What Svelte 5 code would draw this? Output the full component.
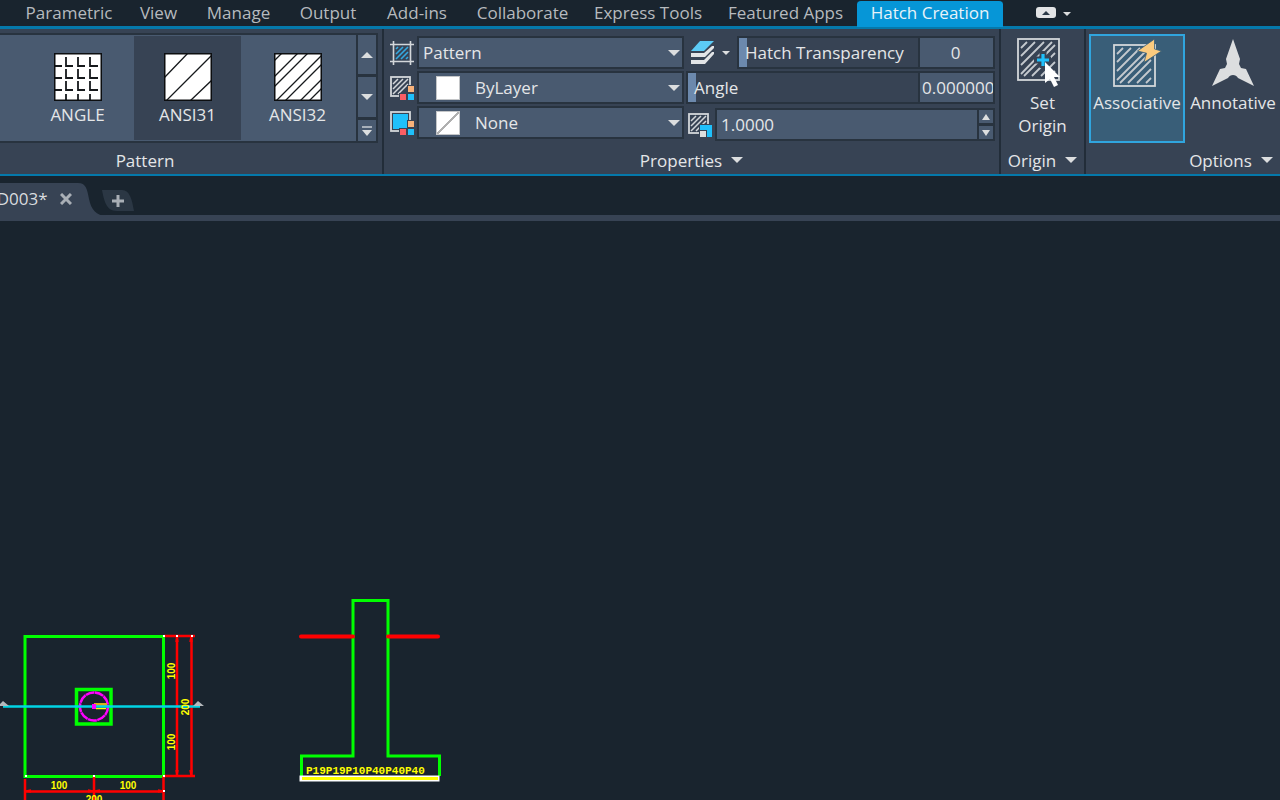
<script>
  const tabs = ['Parametric', 'View', 'Manage', 'Output', 'Add-ins', 'Collaborate', 'Express Tools', 'Featured Apps', 'Hatch Creation'];
  let activeTab = $state('Hatch Creation');
  let pattern = $state('ANSI31');
  let associative = $state(true);
  let transparency = $state(0);
  let angle = $state(0);
  const patterns = [
    { name: 'ANGLE', d: 'M0 13h8M12 4v9h7M24 4v9h7M36 4v9h8M0 25h8M12 16v9h7M24 16v9h7M36 16v9h8M0 37h8M12 28v9h7M24 28v9h7M36 28v9h8M12 41v7M24 41v7M36 41v7' },
    { name: 'ANSI31', d: 'M0 25L24 0M2 48L48 2M26 48L48 27' },
    { name: 'ANSI32', d: 'M0 8L8 0M0 24L24 0M0 34L34 0M2 48L48 2M11 48L48 11M26 48L48 26M35 48L48 35' }
  ];
</script>

{#snippet caret(w = 12)}
  <svg class="caret" width={w} height={w / 2} viewBox="0 0 12 6" aria-hidden="true"><path d="M0 0h12L6 6z" fill="#dcdedf" /></svg>
{/snippet}

<div class="app">
  <nav class="tabs" aria-label="Ribbon tabs">
    {#each tabs as t}
      <button class="tab" class:active={t === activeTab} onclick={() => (activeTab = t)}>{t}</button>
    {/each}
    <button class="min" aria-label="Minimize ribbon">
      <svg width="36" height="12" viewBox="0 0 36 12"><rect x="1" width="20" height="11" rx="3" fill="#e2e4e6" /><path d="M7 8l4-4 4 4z" fill="#2b3947" /><path d="M28 5h8l-4 4z" fill="#dcdedf" /></svg>
    </button>
  </nav>

  <div class="ribbon">
    <section class="panel pattern-panel">
      <div class="gallery">
        <div class="items">
          {#each patterns as p}
            <button class="item" class:selected={p.name === pattern} onclick={() => (pattern = p.name)}>
              <svg width="48" height="48" viewBox="0 0 48 48"><rect width="48" height="48" fill="#fff" /><path d={p.d} fill="none" stroke="#16191c" stroke-width={p.name === 'ANGLE' ? 1.8 : 1.3} /><rect x=".75" y=".75" width="46.5" height="46.5" fill="none" stroke="#0c0e10" stroke-width="1.5" /></svg>
              <span>{p.name}</span>
            </button>
          {/each}
        </div>
        <div class="scroll">
          <button aria-label="Scroll up"><svg width="12" height="6" viewBox="0 0 12 6"><path d="M0 6h12L6 0z" fill="#dcdedf" /></svg></button>
          <button aria-label="Scroll down">{@render caret()}</button>
          <button aria-label="Expand gallery"><svg width="10" height="10" viewBox="0 0 10 10"><path d="M0 1h10" stroke="#a9b1ba" stroke-width="2" /><path d="M0 4h10L5 10z" fill="#dcdedf" /></svg></button>
        </div>
      </div>
      <h2 class="title">Pattern</h2>
    </section>

    <section class="panel props-panel">
      <div class="props">
        <div class="col">
          <div class="row">
            <svg width="24" height="24" viewBox="0 0 24 24"><path d="M6 18l12-12M6 13l7-7M6 8l2-2M11 18l7-7M16 18l2-2" stroke="#35a9e0" stroke-width="1.6" /><path d="M3.5 0v24M20.5 0v24M0 3.5h24M0 20.5h24" stroke="#d3d7da" stroke-width="1.6" /></svg>
            <div class="combo"><select aria-label="Hatch type"><option>Pattern</option></select>{@render caret()}</div>
          </div>
          <div class="row">
            <svg width="24" height="24" viewBox="0 0 24 24"><rect x="1" y="1" width="19" height="19" fill="none" stroke="#d3d7da" stroke-width="1.8" /><path d="M3 18L18 3M3 13L13 3M3 8l5-5M8 18L18 8" stroke="#d3d7da" stroke-width="1.5" /><path d="M9 17h8v-8h7v15H9z" fill="#374354" /><path d="M18 10h6v6h-6z" fill="#f7b27a" /><path d="M10 18h6v6h-6z" fill="#fb5e64" /><path d="M18 18h6v6h-6z" fill="#1fc0fb" /></svg>
            <div class="combo"><i class="swatch"></i><select class="indent" aria-label="Hatch color"><option>ByLayer</option></select>{@render caret()}</div>
          </div>
          <div class="row">
            <svg width="24" height="24" viewBox="0 0 24 24"><rect x="1" y="1" width="19" height="19" fill="none" stroke="#d3d7da" stroke-width="1.8" /><path d="M3 3h15v15H3z" fill="#1fc0fb" /><path d="M9 17h8v-8h7v15H9z" fill="#374354" /><path d="M18 10h6v6h-6z" fill="#f7b27a" /><path d="M10 18h6v6h-6z" fill="#fb5e64" /><path d="M18 18h6v6h-6z" fill="#1fc0fb" /></svg>
            <div class="combo"><i class="swatch none"></i><select class="indent" aria-label="Background color"><option>None</option></select>{@render caret()}</div>
          </div>
        </div>
        <div class="col right">
          <div class="row">
            <button class="layers" aria-label="Layer override">
              <svg width="24" height="24" viewBox="0 0 24 24"><path d="M10 0h14L14 10H1z" fill="#5ccbf6" /><path d="M1 12h13L22 5h2v2l-9 9H1zM1 19h13l8-8h2v2l-9 10H1z" fill="#e2e4e6" /></svg>
              {@render caret(8)}
            </button>
            <div class="slider">
              <div class="track"><input id="transp" type="range" min="0" max="90" bind:value={transparency} /><label for="transp">Hatch Transparency</label></div>
              <input class="value centered" aria-label="Transparency value" value={transparency} />
            </div>
          </div>
          <div class="row">
            <div class="slider">
              <div class="track"><input id="angle" type="range" min="0" max="359" bind:value={angle} /><label for="angle">Angle</label></div>
              <input class="value" aria-label="Angle value" value={angle.toFixed(10)} />
            </div>
          </div>
          <div class="row scale">
            <svg width="24" height="24" viewBox="0 0 24 24"><rect x="1" y="1" width="19" height="19" fill="none" stroke="#d3d7da" stroke-width="1.8" /><path d="M3 18L18 3M3 13L13 3M3 8l5-5M8 18L18 8" stroke="#d3d7da" stroke-width="1.5" /><path d="M11 11h13v13H11z" fill="#374354" /><path d="M12 12h12v12h-5v-7h-7z" fill="#1fc0fb" /><path d="M12 18h6v6h-6z" fill="#dcdedf" /></svg>
            <div class="spin">
              <input aria-label="Hatch scale" value="1.0000" />
              <div class="steps">
                <button aria-label="Increase scale"><svg width="8" height="6" viewBox="0 0 8 6"><path d="M0 6h8L4 0z" fill="#dcdedf" /></svg></button>
                <button aria-label="Decrease scale"><svg width="8" height="6" viewBox="0 0 8 6"><path d="M0 0h8L4 6z" fill="#dcdedf" /></svg></button>
              </div>
            </div>
          </div>
        </div>
      </div>
      <h2 class="title">Properties {@render caret()}</h2>
    </section>

    <section class="panel origin-panel">
      <button class="big">
        <svg width="52" height="50" viewBox="0 0 52 50"><rect x="1" y="1" width="41" height="41" fill="none" stroke="#d3d7da" stroke-width="1.8" /><path d="M4 10l6-6M4 18L18 4M4 27L27 4M4 36L35 4M7 38L38 7M15 38L38 15M24 38L38 24M33 38l5-5" stroke="#c4c9ce" stroke-width="1.8" /><path d="M26 13v17M17 22h17" stroke="#374354" stroke-width="7" /><path d="M26 16v12M20 22h12" stroke="#1fc0fb" stroke-width="3.200" /><path d="M28 24v21l5-4 4 8 4-2-4-8h6z" fill="#fff" /></svg>
        <span>Set<br />Origin</span>
      </button>
      <h2 class="title">Origin {@render caret()}</h2>
    </section>

    <section class="panel options-panel">
      <div class="options">
        <button class="big toggle" class:on={associative} aria-pressed={associative} onclick={() => (associative = !associative)}>
          <svg width="50" height="50" viewBox="0 0 50 50"><rect x="2" y="6" width="41" height="41" fill="none" stroke="#d3d7da" stroke-width="1.8" /><path d="M5 15l6-6M5 23L19 9M5 32L28 9M5 41L37 9M8 44l31-31M16 44l23-23M25 44l14-14M34 44l5-5" stroke="#c4c9ce" stroke-width="1.8" /><path d="M42.500 0L25.500 12l9 2.200L32 23.500 49.500 12l-7-2z" fill="#fbcb7e" stroke="#395e78" stroke-width=".8" /></svg>
          <span>Associative</span>
        </button>
        <button class="big toggle">
          <svg width="42" height="50" viewBox="0 0 42 50"><path d="M21 0l7 20-1 5 2 4 5 1 8 17-16-8c-2-4-8-4-10 0L0 47l8-17 5-1 2-4-1-5z" fill="#dcdedf" /></svg>
          <span>Annotative</span>
        </button>
      </div>
      <h2 class="title">Options {@render caret()}</h2>
    </section>
  </div>

  <div class="docs">
    <div class="doc">
      <svg class="shape" width="122" height="40" viewBox="0 0 122 40" aria-hidden="true"><path d="M0 7h78c8 0 9 6 11 16 2 10 7 17 18 17H0z" fill="#374354" /></svg>
      <span>AD003*</span>
      <button aria-label="Close drawing"><svg width="12" height="12" viewBox="0 0 12 12"><path d="M1 1l10 10M11 1L1 11" stroke="#a9afb6" stroke-width="3" /></svg></button>
    </div>
    <button class="add" aria-label="New drawing"><svg width="32" height="21" viewBox="0 0 32 21"><path d="M0 0h20c8 0 10 10 12 21H15C4 21 2 10 0 0z" fill="#2b3744" /><path d="M16 5v12M10 11h12" stroke="#a9afb6" stroke-width="3" /></svg></button>
  </div>

  <main>
    <svg class="drawing" viewBox="0 221 1280 579" preserveAspectRatio="xMinYMin meet" role="img" aria-label="Foundation plan and section">
      <g fill="none">
        <rect x="25" y="636.500" width="138.500" height="140" stroke="#0f0" stroke-width="3" />
        <rect x="76.500" y="689.500" width="34.500" height="34.500" stroke="#0f0" stroke-width="3.500" />
        <g stroke="#f00" stroke-width="2.500">
          <path d="M164 636h31M164 776h31M177 636v140M191.500 636v140M25 779v21M94 776v24M163.500 776v24M25 791.500h139" />
          <path d="M176 642l1-5 1 5M176 770l1 5 1-5M190 642l1-5 1 5M190 770l1 5 1-5M31 790l-5 1 5 1M158 790l5 1-5 1M88 790l5 1-5 1M100 790l-5 1 5 1" stroke-width="1.500" />
        </g>
        <circle cx="94" cy="706.500" r="14" stroke="#f0f" stroke-width="2.500" stroke-dasharray="9 .5" />
        <path d="M94 704.500h13" stroke="#d8b018" stroke-width="3" />
        <path d="M96 708.500h10" stroke="#ff0" stroke-width="1.500" />
        <path d="M3 706.500h197" stroke="#00d4e4" stroke-width="2.500" />
        <path d="M92 706.500h4" stroke="#f0f" stroke-width="5" />
      </g>
      <path d="M-2 706l5-5 6 5zM193 706l5-5 6 5z" fill="#b4b8bc" />
      <path d="M163 635h2v2h-2zM176 635h2v2h-2zM191 635h2v2h-2zM163 775h2v2h-2zM25 775h2v2h-2zM93 775h2v2h-2zM163 790h2v2h-2z" fill="#fff" />
      <g class="dim">
        <text x="59" y="789">100</text>
        <text x="128" y="789">100</text>
        <text x="94" y="803">200</text>
        <text transform="translate(175 671) rotate(-90)">100</text>
        <text transform="translate(175 742) rotate(-90)">100</text>
        <text transform="translate(189 707) rotate(-90)">200</text>
      </g>
      <path d="M301.500 776v-20h51.500V600.500h35V756h51.500v20" fill="none" stroke="#0f0" stroke-width="3" />
      <path d="M301 636.500h52M388 636.500h50" stroke="#f00" stroke-width="4" stroke-linecap="round" />
      <rect x="299.500" y="775.500" width="140" height="6" fill="#fff" />
      <path d="M302 778.500h136" stroke="#ff0" stroke-width="3" />
      <text class="marks" x="306" y="774">P19P19P10P40P40P40</text>
    </svg>
  </main>
</div>

<style>
  :global(body) { margin: 0; background: #19242e; }
  .app { min-height: 100vh; display: flex; flex-direction: column; background: #19242e; color: #e4e6e8; font-family: "Open Sans", "Noto Sans", sans-serif; font-size: 17px; line-height: 23px; overflow: hidden; }
  button, input, select { font: inherit; color: inherit; margin: 0; padding: 0; border: 0; border-radius: 0; background: none; min-width: 0; outline: none; }
  button { cursor: pointer; }
  button:focus-visible, input:focus-visible, select:focus-visible { outline: 1px solid #30a5de; }
  svg { display: block; flex: none; }
  .tabs { display: grid; grid-template-columns: 112px 67px 93px 86px 92px 119px 132px 143px 146px auto; justify-content: start; height: 26px; padding-left: 13px; border-bottom: 3px solid #0579ab; }
  .tab { white-space: nowrap; color: #b6babe; padding-bottom: 2px; }
  .tab.active { background: #0696d7; color: #e8f3f9; border-radius: 4px 4px 0 0; border-top: 1px solid #19242e; padding-bottom: 3px; margin-bottom: -1px; }
  .min { padding: 0 32px; }
  .ribbon { display: grid; grid-template-columns: minmax(0, 384fr) minmax(0, 617fr) 85px minmax(0, 194fr); height: 145px; background: #374354; border-bottom: 2px solid #0579ab; }
  .panel { display: flex; flex-direction: column; min-width: 0; border-right: 2px solid #222d39; box-sizing: border-box; }
  .options-panel { border: 0; }
  .title { display: flex; align-items: center; justify-content: center; gap: 9px; margin: auto 0 0; height: 28px; font-size: 17px; font-weight: 400; }
  .pattern-panel .title { padding-right: 92px; }
  .options-panel .title { padding-left: 96px; }
  .gallery { display: flex; margin-top: 4px; margin-right: 4px; height: 106px; border: 2px solid #28333f; border-left: 0; background: #28333f; gap: 2px; }
  .items { flex: 1; display: flex; gap: 3px; background: #495a70; padding: 1px 0 1px 24px; }
  .item { width: 107px; display: flex; flex-direction: column; align-items: center; padding-top: 17px; box-sizing: border-box; gap: 2px; }
  .item.selected { background: #374354; }
  .scroll { width: 18px; display: grid; grid-template-rows: 39fr 40fr 21fr; gap: 3px; }
  .scroll button { background: #495a70; display: grid; place-items: center; }
  .props { display: flex; padding: 7px 4px 0 6px; gap: 2px; }
  .col { flex: 294; display: flex; flex-direction: column; gap: 2px; min-width: 0; }
  .col.right { flex: 309; }
  .row { display: flex; align-items: center; gap: 3px; height: 33px; }
  .row.scale { padding: 2px 0 0 2px; }
  .combo { flex: 1; position: relative; display: flex; align-items: center; height: 33px; box-sizing: border-box; border: 2px solid #28333f; background: #495a70; min-width: 0; }
  select { appearance: none; width: 100%; height: 100%; padding-left: 4px; }
  select.indent { padding-left: 56px; }
  .combo .caret { position: absolute; right: 2px; pointer-events: none; }
  .swatch { position: absolute; left: 17px; width: 22px; height: 22px; background: #fff; border: 1px solid #c4c6c8; pointer-events: none; }
  .swatch.none { background: linear-gradient(to bottom right, #fff 47%, #b0b0b0 47%, #b0b0b0 53%, #fff 53%); }
  .layers { display: flex; align-items: center; gap: 8px; padding: 0 4px; }
  .slider { flex: 1; display: flex; height: 33px; box-sizing: border-box; border: 2px solid #28333f; min-width: 0; }
  .track { flex: 1; position: relative; display: flex; align-items: center; min-width: 0; }
  .track label { position: relative; padding-left: 6px; pointer-events: none; white-space: nowrap; }
  input[type='range'] { appearance: none; position: absolute; inset: 0; width: 100%; height: 100%; }
  input[type='range']::-webkit-slider-thumb { appearance: none; width: 8px; height: 29px; background: #6c89ad; }
  .value { width: 75px; box-sizing: border-box; background: #495a70; border-left: 2px solid #28333f; padding-left: 2px; }
  .centered { text-align: center; padding: 0 2px 0 0; }
  .spin { flex: 1; display: flex; height: 33px; box-sizing: border-box; border: 2px solid #28333f; background: #28333f; gap: 2px; min-width: 0; }
  .spin input { flex: 1; background: #495a70; padding-left: 4px; }
  .steps { width: 14px; display: grid; gap: 3px; }
  .steps button { background: #495a70; display: grid; place-items: center; }
  .big { display: flex; flex-direction: column; align-items: center; }
  .origin-panel .big { padding-top: 9px; gap: 3px; }
  .options { display: flex; padding: 5px 0 0 3px; }
  .toggle { flex: none; width: 96px; height: 109px; box-sizing: border-box; padding-top: 3px; gap: 2px; border: 2px solid transparent; }
  .toggle.on { background: #395e78; border-color: #30a5de; }
  .docs { display: flex; align-items: start; height: 39px; border-bottom: 6px solid #374354; }
  .doc { position: relative; display: flex; align-items: center; height: 39px; padding-top: 6px; box-sizing: border-box; }
  .shape { position: absolute; left: 0; top: 0; }
  .doc span, .doc button { position: relative; }
  .doc span { margin-left: -14px; color: #d9dcdf; }
  .doc button { margin: 0 30px 0 12px; }
  .add { margin-top: 14px; }
  main { flex: 1; overflow: hidden; }
  .drawing { width: 100%; height: 579px; }
  .dim { font-size: 10px; font-weight: 700; fill: #ff0; text-anchor: middle; font-family: "Liberation Sans", sans-serif; }
  .marks { font: 700 11px "Liberation Mono", monospace; fill: #ff0; }
</style>
